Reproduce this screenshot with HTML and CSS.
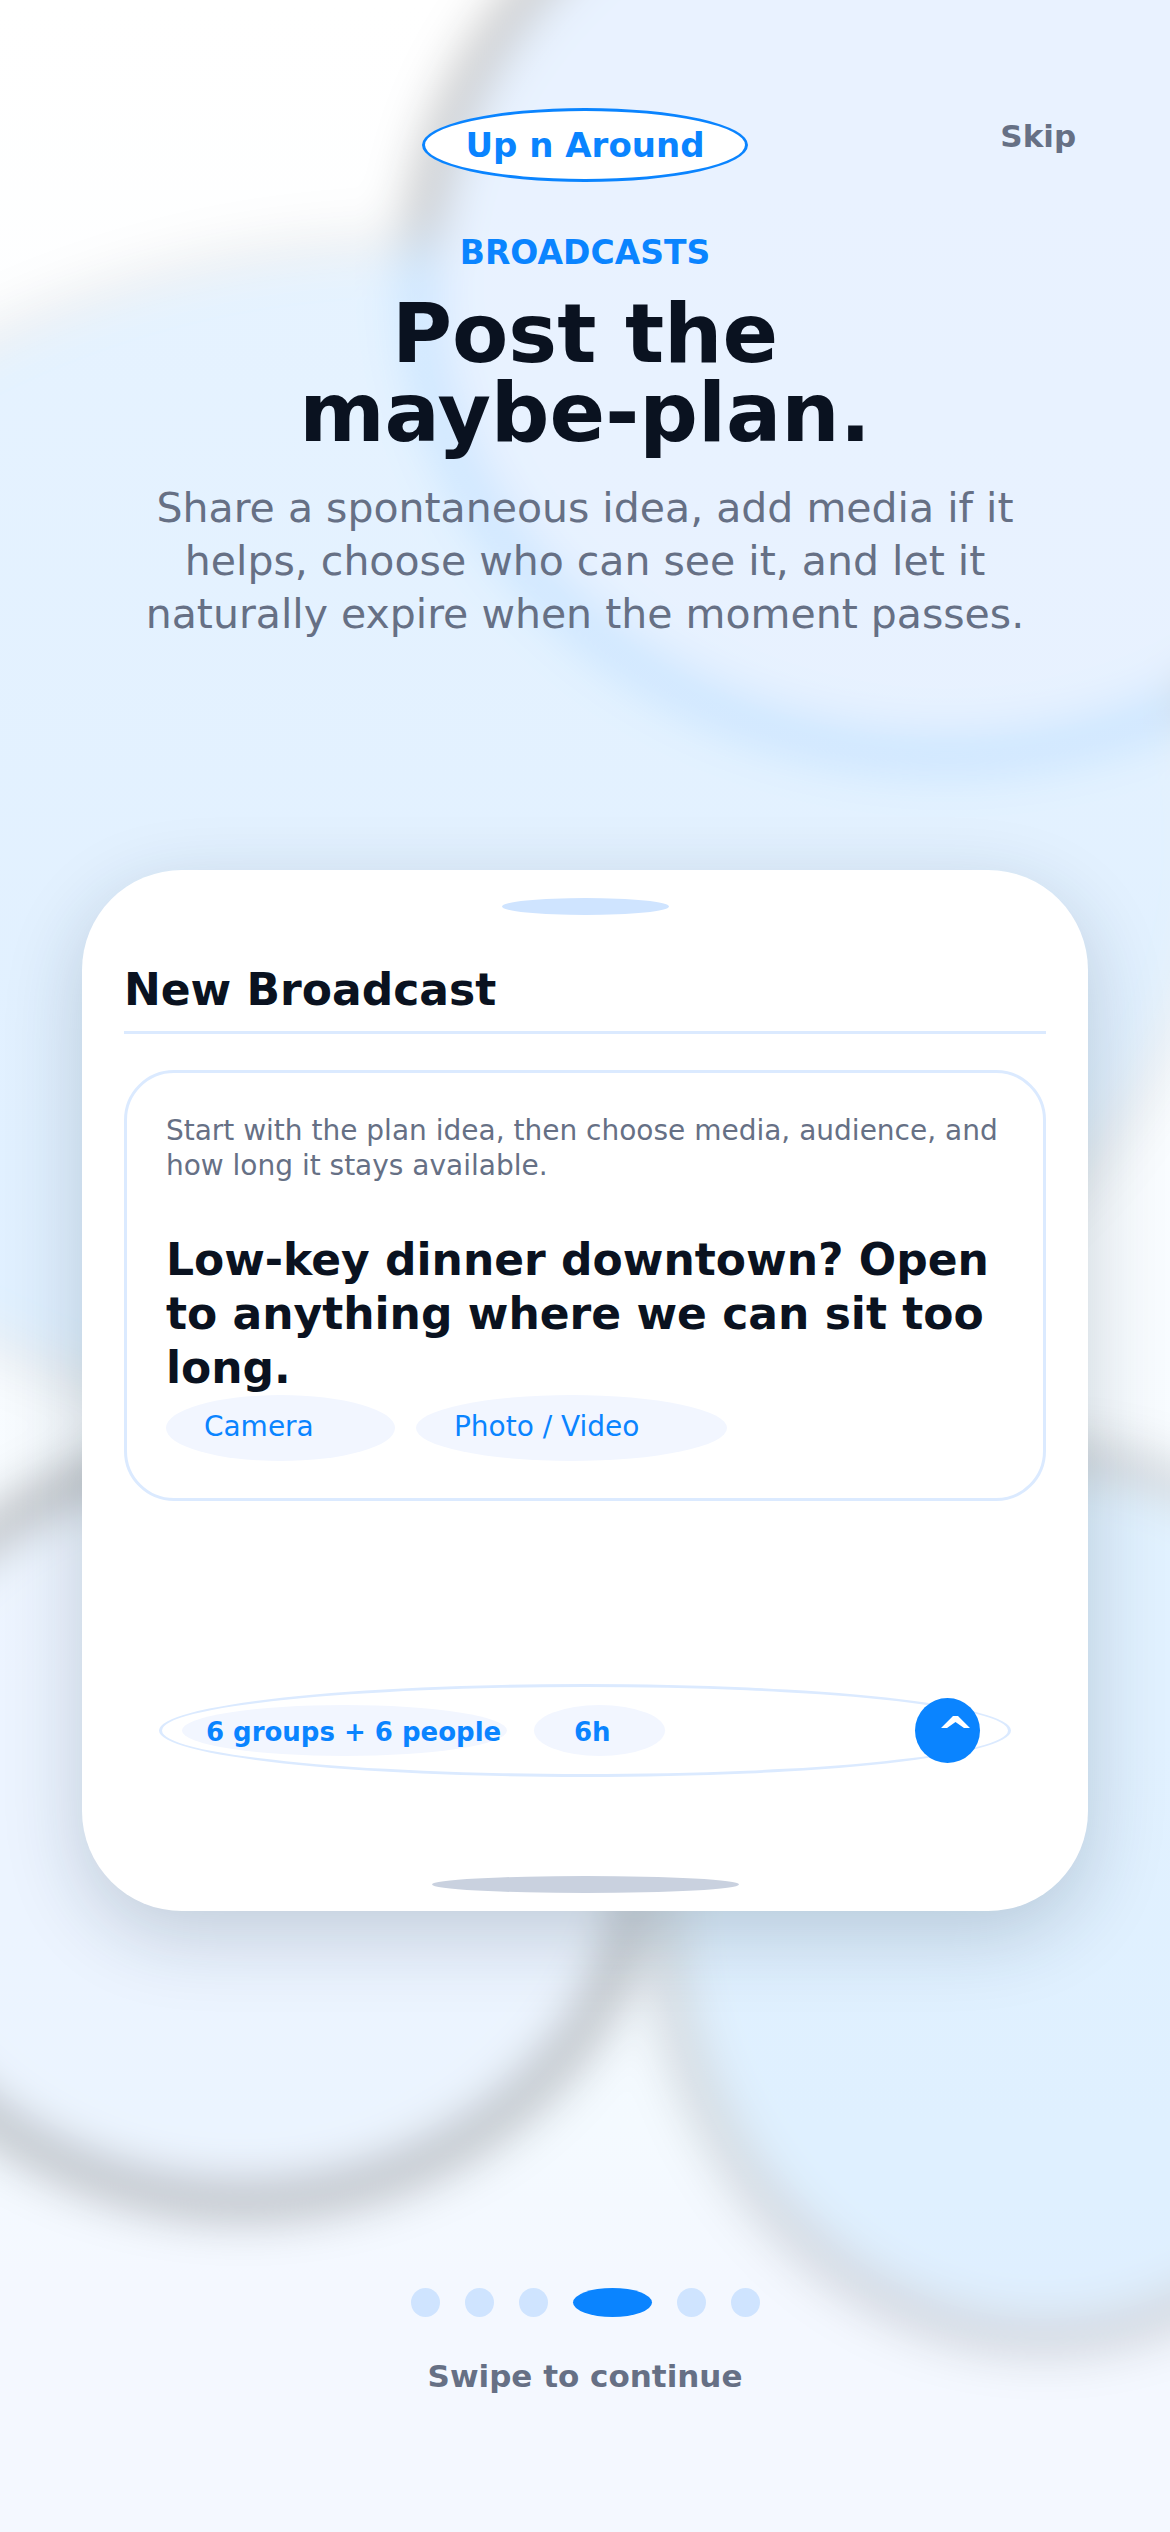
FILE: index.html
```html
<!DOCTYPE html>
<html lang="en">
<head>
  <meta charset="UTF-8" />
  <meta name="viewport" content="width=device-width, initial-scale=1.0">
  <title>Up n Around</title>

  <link rel="stylesheet" href="styles.css">
</head>

<body>

  <!-- soft blobs: colour layer blurred on black, opacity comes from the blurred mask -->
  <svg class="backdrop" viewBox="0 0 1170 2532" preserveAspectRatio="none" aria-hidden="true">
    <defs>
      <filter id="soft" filterUnits="userSpaceOnUse" x="-600" y="-400" width="2400" height="3300" color-interpolation-filters="sRGB">
        <feGaussianBlur stdDeviation="28" />
      </filter>
      <mask id="blobMask" maskUnits="userSpaceOnUse" x="-600" y="-400" width="2400" height="3300">
        <g filter="url(#soft)">
          <rect x="-600" y="-400" width="2400" height="3300" fill="#000" />
          <ellipse cx="422" cy="840" rx="797" ry="600" fill="rgb(29,29,29)" />
          <ellipse cx="948" cy="281" rx="530" ry="474" fill="rgb(130,130,130)" />
          <ellipse cx="243" cy="1826" rx="405" ry="376" fill="rgb(148,148,148)" />
          <ellipse cx="1044" cy="1897" rx="384" ry="442" fill="rgb(84,84,84)" />
        </g>
      </mask>
    </defs>
    <g mask="url(#blobMask)">
      <g filter="url(#soft)">
        <rect x="-600" y="-400" width="2400" height="3300" fill="#000" />
        <ellipse cx="422" cy="840" rx="797" ry="600" fill="rgb(40,150,255)" />
        <ellipse cx="948" cy="281" rx="530" ry="474" fill="rgb(211,230,255)" />
        <ellipse cx="243" cy="1826" rx="405" ry="376" fill="rgb(230,240,255)" />
        <ellipse cx="1044" cy="1897" rx="384" ry="442" fill="rgb(182,222,255)" />
      </g>
    </g>
  </svg>

  <main class="screen">
    <header class="top-bar">
      <div class="logo">Up n Around</div>
      <button type="button" class="skip">Skip</button>
    </header>

    <section class="intro">
      <p class="eyebrow">BROADCASTS</p>
      <h1>Post the<br>maybe-plan.</h1>
      <p class="lead">Share a spontaneous idea, add media if it helps, choose who can see it, and let it naturally expire when the moment passes.</p>
    </section>

    <section class="phone">
      <div class="speaker"></div>
      <h2>New Broadcast</h2>

      <div class="compose">
        <label for="plan">Start with the plan idea, then choose media, audience, and how long it stays available.</label>
        <textarea id="plan" rows="3">Low-key dinner downtown? Open to anything where we can sit too long.</textarea>
        <div class="media">
          <button type="button" class="pill camera">Camera</button>
          <button type="button" class="pill photo">Photo / Video</button>
        </div>
      </div>

      <div class="send-bar">
        <button type="button" class="chip audience">6 groups + 6 people</button>
        <button type="button" class="chip duration">6h</button>
        <button type="button" class="send" aria-label="Send">
          <svg viewBox="0 0 65 65" aria-hidden="true"><path d="M26 30 L38 18 H43 L55 30 H49 L40.500 24 L32 30 Z" fill="#fff" /></svg>
        </button>
      </div>

      <div class="home-bar"></div>
    </section>

    <footer class="bottom">
      <div class="dots">
        <span class="dot"></span>
        <span class="dot"></span>
        <span class="dot"></span>
        <span class="dot active"></span>
        <span class="dot"></span>
        <span class="dot"></span>
      </div>
      <p>Swipe to continue</p>
    </footer>
  </main>

</body>
</html>
```

FILE: styles.css
```css
* {
  box-sizing: border-box;
}

body {
  margin: 0;
  background: linear-gradient(#ffffff, #f4faff 84%, #f4f8ff 90%);
  font-family: "DejaVu Sans", Verdana, sans-serif;
  color: #0a1220;
}

h1, h2, p {
  margin: 0;
}

button {
  padding: 0;
  border: none;
  background: none;
  font-family: inherit;
  cursor: pointer;
}

.backdrop {
  position: absolute;
  top: 0;
  left: 0;
  width: 100%;
  height: 100%;
  z-index: -1;
}

.screen {
  display: flex;
  flex-direction: column;
  min-height: 100vh;
  padding: 108px 7% 138px;
}

/* header */

.top-bar {
  display: grid;
  grid-template-columns: 1fr auto 1fr;
  align-items: start;
}

.logo {
  grid-column: 2;
  padding: 14px 40px;
  border: 3px solid #0a84ff;
  border-radius: 50%;
  background: #fff;
  color: #0a84ff;
  font-size: 34px;
  font-weight: bold;
  line-height: 40px;
}

.skip {
  justify-self: end;
  padding: 8px 12px;
  color: #667085;
  font-size: 31px;
  font-weight: bold;
  line-height: 40px;
}

/* intro */

.intro {
  margin-top: 51px;
  text-align: center;
}

.eyebrow {
  color: #0a84ff;
  font-size: 33px;
  font-weight: bold;
  line-height: 40px;
}

h1 {
  margin-top: 21px;
  font-size: 82px;
  line-height: 79px;
}

.lead {
  max-width: 900px;
  margin: 30px auto 0;
  color: #667085;
  font-size: 41px;
  line-height: 53px;
}

/* phone preview */

.phone {
  margin-top: 229px;
  padding: 28px 42px 18px;
  border-radius: 100px;
  background: #fff;
  box-shadow: 0 24px 80px rgba(20, 45, 65, 0.2);
}

.speaker,
.home-bar {
  height: 17px;
  margin: 0 auto;
  border-radius: 50%;
}

.speaker {
  width: 167px;
  background: #cfe4ff;
}

.home-bar {
  width: 307px;
  margin-top: 99px;
  background: #c9d1df;
}

h2 {
  margin-top: 49px;
  padding-bottom: 15px;
  border-bottom: 3px solid #dbeaff;
  font-size: 44px;
  line-height: 52px;
}

.compose {
  margin-top: 36px;
  padding: 40px 39px 37px;
  border: 3px solid #dbeaff;
  border-radius: 50px;
}

.compose label {
  display: block;
  color: #667085;
  font-size: 28px;
  line-height: 35px;
}

.compose textarea {
  display: block;
  width: 100%;
  margin-top: 50px;
  padding: 0;
  border: none;
  outline: none;
  resize: none;
  overflow: hidden;
  background: none;
  color: inherit;
  font-family: inherit;
  font-size: 44px;
  font-weight: bold;
  line-height: 54px;
}

.media {
  display: flex;
  gap: 21px;
}

.pill,
.chip {
  border-radius: 50%;
  background: #f2f6ff;
  color: #0a84ff;
  text-align: left;
}

.pill {
  height: 66px;
  padding: 0 38px 3px;
  font-size: 28px;
}

.camera {
  width: 229px;
}

.photo {
  width: 311px;
}

.send-bar {
  display: flex;
  align-items: center;
  gap: 27px;
  height: 93px;
  margin: 183px 35px 0;
  padding: 0 28px 0 20px;
  border: 3px solid #dbeaff;
  border-radius: 50%;
}

.chip {
  height: 51px;
  padding-top: 2px;
  font-size: 26px;
  font-weight: bold;
  white-space: nowrap;
}

.audience {
  width: 325px;
  padding-left: 24px;
}

.duration {
  width: 131px;
  padding-left: 40px;
}

.send {
  width: 65px;
  height: 65px;
  margin-left: auto;
  border-radius: 50%;
  background: #0a84ff;
}

.send svg {
  display: block;
  width: 100%;
}

/* footer */

.bottom {
  margin-top: auto;
  color: #667085;
  font-size: 31px;
  font-weight: bold;
  line-height: 36px;
  text-align: center;
}

.dots {
  display: flex;
  justify-content: center;
  gap: 25px;
  margin-bottom: 41px;
}

.dot {
  width: 29px;
  height: 29px;
  border-radius: 50%;
  background: #cfe4ff;
}

.dot.active {
  width: 79px;
  background: #0a84ff;
}
```
